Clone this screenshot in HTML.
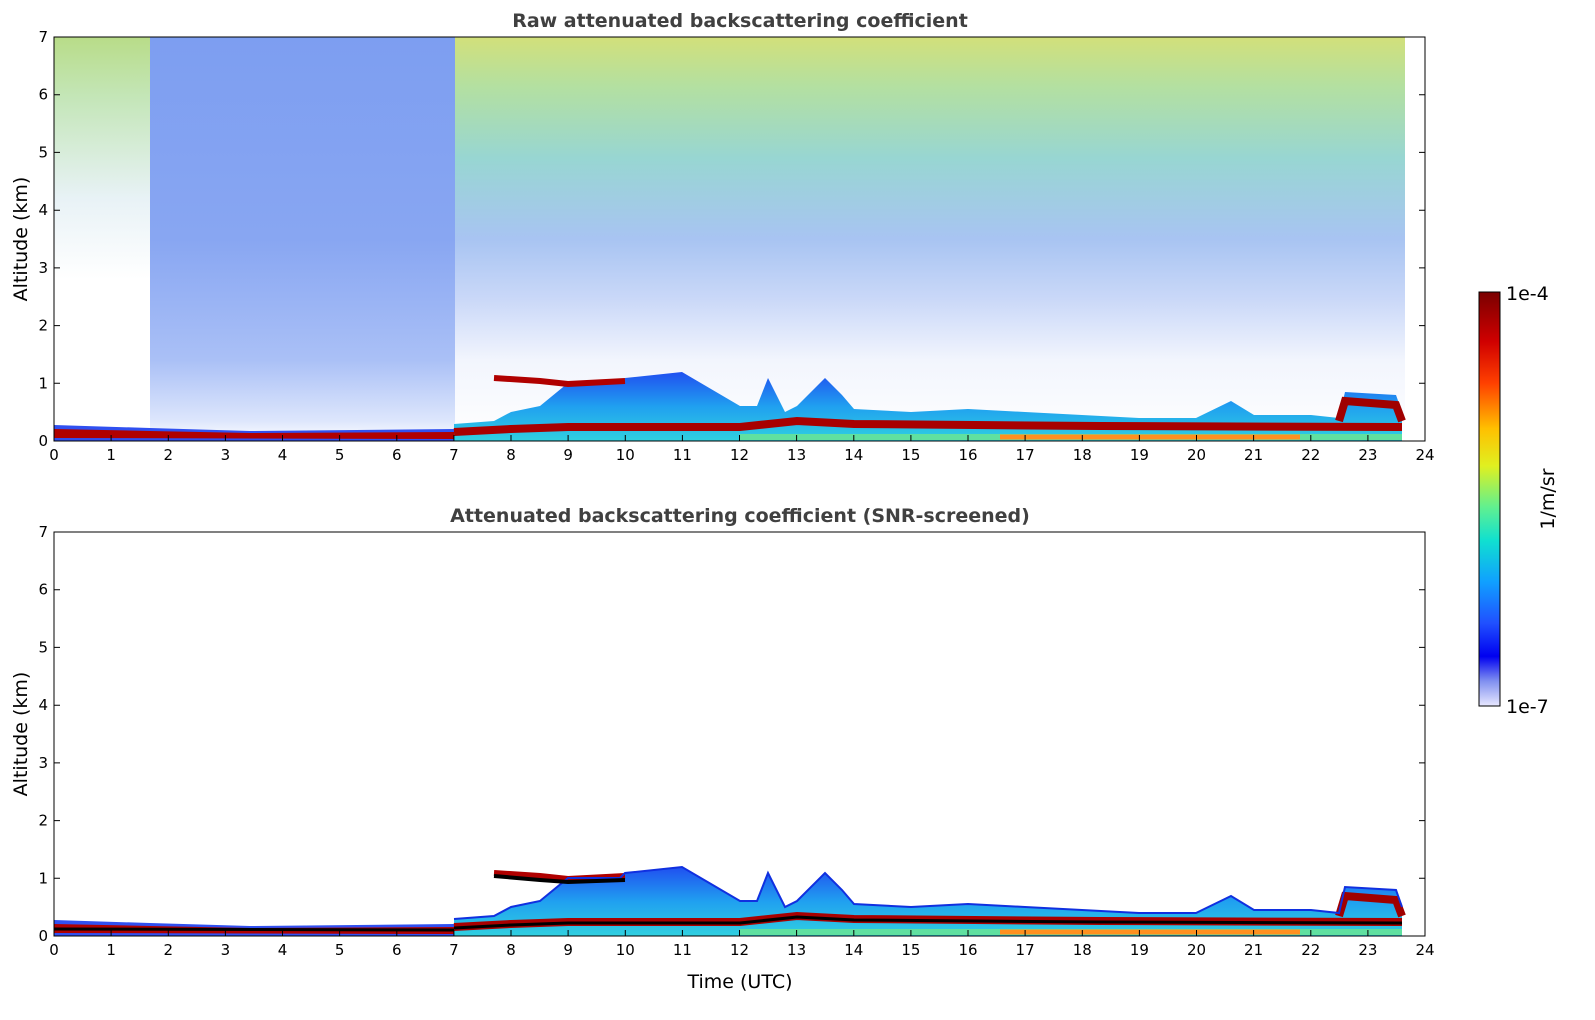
<!DOCTYPE html>
<html><head><meta charset="utf-8"><style>
html,body{margin:0;padding:0;background:#fff;}
svg{display:block;font-family:"DejaVu Sans","Liberation Sans",sans-serif;}
</style></head><body>
<svg width="1595" height="1020" viewBox="0 0 1595 1020" xmlns="http://www.w3.org/2000/svg">
<defs>
<linearGradient id="gA" x1="0" y1="0" x2="0" y2="1">
<stop offset="0" stop-color="#b8dc88"/><stop offset="0.15" stop-color="#c4e6b8"/><stop offset="0.4" stop-color="#e8f2f6"/><stop offset="0.6" stop-color="#ffffff"/><stop offset="1" stop-color="#ffffff"/>
</linearGradient>
<linearGradient id="gB" x1="0" y1="0" x2="0" y2="1">
<stop offset="0" stop-color="#7d9ef1"/><stop offset="0.5" stop-color="#88a6f2"/><stop offset="0.8" stop-color="#aac0f6"/><stop offset="0.95" stop-color="#dde6fc"/><stop offset="1" stop-color="#ffffff"/>
</linearGradient>
<linearGradient id="gC" x1="0" y1="0" x2="0" y2="1">
<stop offset="0" stop-color="#d2e07a"/><stop offset="0.12" stop-color="#b4e0a0"/><stop offset="0.3" stop-color="#98d6d2"/><stop offset="0.5" stop-color="#a8c4f2"/><stop offset="0.65" stop-color="#cad8f8"/><stop offset="0.8" stop-color="#f2f5fd"/><stop offset="1" stop-color="#ffffff"/>
</linearGradient>
<linearGradient id="gJet" x1="0" y1="0" x2="0" y2="1">
<stop offset="0" stop-color="#7a0000"/><stop offset="0.12" stop-color="#d00000"/><stop offset="0.22" stop-color="#ff4000"/><stop offset="0.33" stop-color="#ffc000"/><stop offset="0.42" stop-color="#e0f020"/><stop offset="0.52" stop-color="#60f090"/><stop offset="0.6" stop-color="#10e0d0"/><stop offset="0.7" stop-color="#10a0ff"/><stop offset="0.8" stop-color="#2050ff"/><stop offset="0.88" stop-color="#0000f0"/><stop offset="0.94" stop-color="#8090f0"/><stop offset="1" stop-color="#e8e8ff"/>
</linearGradient>
<linearGradient id="gBL" x1="0" y1="0" x2="0" y2="1">
<stop offset="0" stop-color="#2050f0"/><stop offset="0.5" stop-color="#20a0f0"/><stop offset="1" stop-color="#30d0e0"/>
</linearGradient>
<g id="bl">
<path d="M54,-16 L150,-13 L250,-10 L454,-12 L454,0 L54,0Z" fill="#3050f0"/>
<path d="M54,-12 L150,-10 L250,-8 L454,-9 L454,-2 L54,-3Z" fill="#b00000"/>
<path d="M454,-17 L494,-20 L511,-29 L540,-35 L568,-58 L620,-58 L625,-63 L682,-69 L711,-52 L740,-35 L757,-35 L768,-63 L785,-29 L797,-35 L825,-63 L842,-46 L854,-32 L911,-29 L968,-32 L1025,-29 L1082,-26 L1139,-23 L1196,-23 L1231,-40 L1254,-26 L1311,-26 L1339,-23 L1345,-49 L1396,-46 L1402,-29 L1402,0 L454,0Z" fill="url(#gBL)"/>
<path d="M454,-9 L511,-12 L568,-14 L740,-14 L797,-20 L854,-17 L1100,-15 L1402,-14" stroke="#a80000" stroke-width="8" fill="none"/>
<path d="M1339,-20 L1345,-40 L1396,-36 L1402,-20" stroke="#a00000" stroke-width="8" fill="none"/>
<path d="M494,-63 L540,-60 L568,-57 L625,-60" stroke="#b00000" stroke-width="6" fill="none"/>
<path d="M740,-4 L1402,-4" stroke="#60e0a0" stroke-width="6" fill="none"/>
<path d="M1000,-4 L1300,-4" stroke="#ff9020" stroke-width="5" fill="none"/>
</g>
</defs>

<!-- Top plot -->
<text x="740" y="27" text-anchor="middle" font-size="19" font-weight="bold" fill="#404040">Raw attenuated backscattering coefficient</text>
<rect x="54" y="37" width="96" height="404" fill="url(#gA)"/>
<rect x="150" y="37" width="305" height="404" fill="url(#gB)"/>
<rect x="455" y="37" width="950" height="404" fill="url(#gC)"/>
<use href="#bl" x="0" y="441"/>
<rect x="54" y="37" width="1371" height="404" fill="none" stroke="#000" stroke-width="1"/>

<!-- Bottom plot -->
<text x="740" y="522" text-anchor="middle" font-size="19" font-weight="bold" fill="#404040">Attenuated backscattering coefficient (SNR-screened)</text>
<use href="#bl" x="0" y="936"/>
<path d="M454,919 L494,916 L511,907 L540,901 L568,878 L620,878 L625,873 L682,867 L711,884 L740,901 L757,901 L768,873 L785,907 L797,901 L825,873 L842,890 L854,904 L911,907 L968,904 L1025,907 L1082,910 L1139,913 L1196,913 L1231,896 L1254,910 L1311,910 L1339,913 L1345,887 L1396,890 L1402,907" stroke="#1030e0" stroke-width="2" fill="none"/>
<path d="M494,876 L540,880 L568,882 L625,880" stroke="#000" stroke-width="4" fill="none"/>
<path d="M454,928 L511,925 L568,923 L740,923 L797,917 L854,920 L1100,922 L1402,923" stroke="#000" stroke-width="3" fill="none"/>
<path d="M54,929 L454,930" stroke="#000" stroke-width="3" fill="none"/>
<rect x="54" y="532" width="1371" height="404" fill="none" stroke="#000" stroke-width="1"/>

<!-- ticks & labels -->
<g stroke="#000" stroke-width="1">
<path d="M54,441v-6M111.1,441v-6M168.3,441v-6M225.4,441v-6M282.5,441v-6M339.6,441v-6M396.8,441v-6M453.9,441v-6M511,441v-6M568.1,441v-6M625.3,441v-6M682.4,441v-6M739.5,441v-6M796.6,441v-6M853.8,441v-6M910.9,441v-6M968,441v-6M1025.1,441v-6M1082.3,441v-6M1139.4,441v-6M1196.5,441v-6M1253.6,441v-6M1310.8,441v-6M1367.9,441v-6M1425,441v-6"/>
<path d="M54,936v-6M111.1,936v-6M168.3,936v-6M225.4,936v-6M282.5,936v-6M339.6,936v-6M396.8,936v-6M453.9,936v-6M511,936v-6M568.1,936v-6M625.3,936v-6M682.4,936v-6M739.5,936v-6M796.6,936v-6M853.8,936v-6M910.9,936v-6M968,936v-6M1025.1,936v-6M1082.3,936v-6M1139.4,936v-6M1196.5,936v-6M1253.6,936v-6M1310.8,936v-6M1367.9,936v-6M1425,936v-6"/>
<path d="M54,383.3h6M54,325.6h6M54,267.9h6M54,210.2h6M54,152.4h6M54,94.7h6M1425,383.3h-6M1425,325.6h-6M1425,267.9h-6M1425,210.2h-6M1425,152.4h-6M1425,94.7h-6"/>
<path d="M54,878.3h6M54,820.6h6M54,762.9h6M54,705.2h6M54,647.4h6M54,589.7h6M1425,878.3h-6M1425,820.6h-6M1425,762.9h-6M1425,705.2h-6M1425,647.4h-6M1425,589.7h-6"/>
</g>
<g font-size="15" fill="#000" text-anchor="middle">
<text x="54" y="460">0</text><text x="111.1" y="460">1</text><text x="168.3" y="460">2</text><text x="225.4" y="460">3</text><text x="282.5" y="460">4</text><text x="339.6" y="460">5</text><text x="396.8" y="460">6</text><text x="453.9" y="460">7</text><text x="511" y="460">8</text><text x="568.1" y="460">9</text><text x="625.3" y="460">10</text><text x="682.4" y="460">11</text><text x="739.5" y="460">12</text><text x="796.6" y="460">13</text><text x="853.8" y="460">14</text><text x="910.9" y="460">15</text><text x="968" y="460">16</text><text x="1025.1" y="460">17</text><text x="1082.3" y="460">18</text><text x="1139.4" y="460">19</text><text x="1196.5" y="460">20</text><text x="1253.6" y="460">21</text><text x="1310.8" y="460">22</text><text x="1367.9" y="460">23</text><text x="1425" y="460">24</text>
<text x="54" y="955">0</text><text x="111.1" y="955">1</text><text x="168.3" y="955">2</text><text x="225.4" y="955">3</text><text x="282.5" y="955">4</text><text x="339.6" y="955">5</text><text x="396.8" y="955">6</text><text x="453.9" y="955">7</text><text x="511" y="955">8</text><text x="568.1" y="955">9</text><text x="625.3" y="955">10</text><text x="682.4" y="955">11</text><text x="739.5" y="955">12</text><text x="796.6" y="955">13</text><text x="853.8" y="955">14</text><text x="910.9" y="955">15</text><text x="968" y="955">16</text><text x="1025.1" y="955">17</text><text x="1082.3" y="955">18</text><text x="1139.4" y="955">19</text><text x="1196.5" y="955">20</text><text x="1253.6" y="955">21</text><text x="1310.8" y="955">22</text><text x="1367.9" y="955">23</text><text x="1425" y="955">24</text>
</g>
<g font-size="15" fill="#000" text-anchor="end">
<text x="48" y="446">0</text><text x="48" y="388.3">1</text><text x="48" y="330.6">2</text><text x="48" y="272.9">3</text><text x="48" y="215.2">4</text><text x="48" y="157.4">5</text><text x="48" y="99.7">6</text><text x="48" y="42">7</text>
<text x="48" y="941">0</text><text x="48" y="883.3">1</text><text x="48" y="825.6">2</text><text x="48" y="767.9">3</text><text x="48" y="710.2">4</text><text x="48" y="652.4">5</text><text x="48" y="594.7">6</text><text x="48" y="537">7</text>
</g>
<text x="740" y="988" text-anchor="middle" font-size="19" fill="#000">Time (UTC)</text>
<text transform="translate(27,239) rotate(-90)" text-anchor="middle" font-size="19" fill="#000">Altitude (km)</text>
<text transform="translate(27,734) rotate(-90)" text-anchor="middle" font-size="19" fill="#000">Altitude (km)</text>

<!-- colorbar -->
<rect x="1479" y="292" width="21" height="414" fill="url(#gJet)" stroke="#000" stroke-width="1"/>
<text x="1506" y="300" font-size="19" fill="#000">1e-4</text>
<text x="1506" y="713" font-size="19" fill="#000">1e-7</text>
<text transform="translate(1554,499) rotate(-90)" text-anchor="middle" font-size="19" fill="#000">1/m/sr</text>
</svg>
</body></html>
